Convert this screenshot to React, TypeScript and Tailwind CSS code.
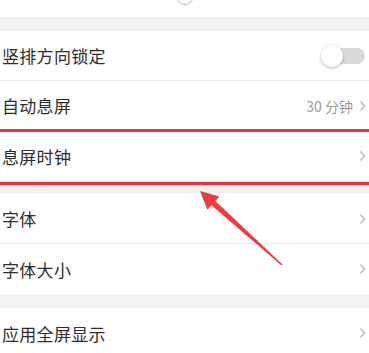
import React from 'react';

const font = { fontFamily: '"Noto Sans CJK SC", "Noto Sans", sans-serif' };

function Chevron() {
  return (
    <svg width="7" height="12" viewBox="0 0 7 12" className="shrink-0">
      <polyline points="1.5,1.5 5.5,6 1.5,10.5" fill="none" stroke="#b5b5b5" strokeWidth="1.3" />
    </svg>
  );
}

function Row({ label, value, toggle, last }: { label: string; value?: string; toggle?: boolean; last?: boolean }) {
  return (
    <div className={`h-[50px] flex items-center justify-between pl-[2px] pr-[3px] bg-white ${last ? '' : 'border-b border-[#ededed]'}`}>
      <span className="text-[17px] text-[#2e2e2e] leading-none tracking-[0.3px]">{label}</span>
      {toggle ? (
        <div className="relative w-[44px] h-[22px] mr-[1px]">
          <div className="absolute right-0 top-[3px] w-[36px] h-[16px] rounded-full bg-[#dadada]" />
          <div className="absolute left-0 top-0 w-[22px] h-[22px] rounded-full bg-white shadow-[0_1px_3px_rgba(0,0,0,0.3)]" />
        </div>
      ) : (
        <div className="flex items-center gap-[6px]">
          {value && <span className="text-[14px] text-[#9a9a9a] leading-none">{value}</span>}
          <Chevron />
        </div>
      )}
    </div>
  );
}

export default function App() {
  return (
    <div className="relative w-[369px] h-[353px] overflow-hidden bg-white" style={font}>
      <div className="relative h-[17px] bg-white">
        <div className="absolute left-[176px] top-[-13px] w-[18px] h-[18px] rounded-full bg-white border border-[#bdbdbd]" />
      </div>
      <div className="h-[14px] bg-[#f2f2f2]" />
      <Row label="竖排方向锁定" toggle />
      <Row label="自动息屏" value="30 分钟" />
      <Row label="息屏时钟" last />
      <div className="h-[13px] bg-[#f2f2f2]" />
      <Row label="字体" />
      <Row label="字体大小" last />
      <div className="h-[14px] bg-[#f2f2f2]" />
      <Row label="应用全屏显示" last />

      <div className="absolute left-[-4px] right-[-4px] top-[129px] h-[56px] border-y-[3px] border-[#e8343a]" />
      <svg className="absolute left-0 top-0" width="369" height="353" viewBox="0 0 369 353">
        <polygon
          points="200,191 219.4,196.4 215.4,200.9 282.5,264.5 281.5,265.5 211.4,205.3 207.4,209.8"
          fill="#f03c3c"
        />
      </svg>
    </div>
  );
}
